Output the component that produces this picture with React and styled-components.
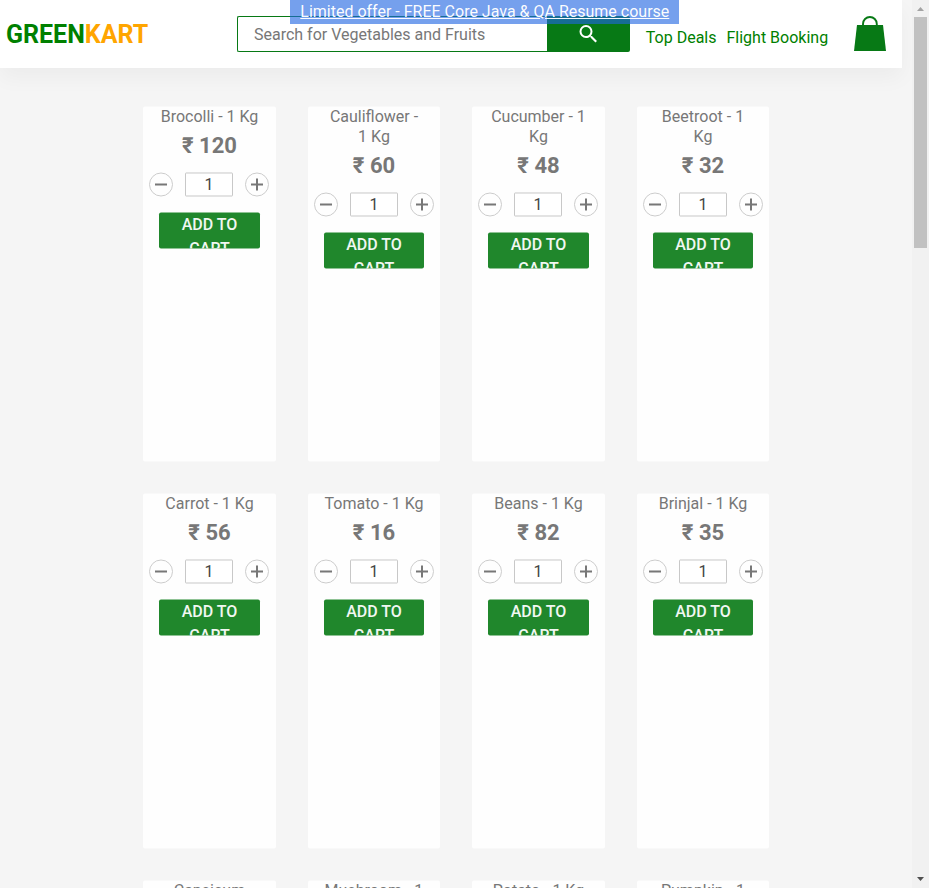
import React from "react";
import styled, { createGlobalStyle } from "styled-components";

const GlobalStyle = createGlobalStyle`
  *, *::before, *::after { box-sizing: border-box; }
  html, body { margin: 0; height: 100%; overflow: hidden; }
  body { background: #f5f5f5; font-family: Roboto, sans-serif; font-size: 16px; }
`;

const Page = styled.div`
  position: relative;
  display: flex;
  height: 888px;
  overflow: hidden;
`;

const Content = styled.div`
  width: 912px;
  height: 888px;
  overflow: hidden;
`;

const Header = styled.header`
  display: flex;
  align-items: flex-start;
  width: 902px;
  height: 68px;
  background: #fff;
  box-shadow: 0 10px 20px rgba(0, 0, 0, 0.04);
`;

const Brand = styled.div`
  width: 231px;
  margin: 20px 0 0 6px;
  font-size: 25px;
  line-height: 30px;
  font-weight: 700;
  color: #008000;
`;

const BrandAccent = styled.span`
  color: #ffa500;
`;

const Search = styled.form`
  display: flex;
  width: 393px;
  height: 36px;
  margin-top: 16px;
`;

const SearchInput = styled.input`
  width: 310px;
  height: 36px;
  padding: 0 16px;
  border: 1px solid #077915;
  border-right: 0;
  border-radius: 2px 0 0 2px;
  outline: none;
  background: #fff;
  font: 16px Roboto, sans-serif;
  color: #555;
  &::placeholder { color: #777; opacity: 1; }
`;

const SearchButton = styled.button`
  width: 83px;
  height: 36px;
  padding: 0;
  border: 0;
  border-radius: 0 2px 2px 0;
  background: #077915;
  svg { display: block; margin: -1px 0 0 29px; }
`;

const Nav = styled.nav`
  display: flex;
  gap: 10px;
  width: 208px;
  margin: 28px 0 0 15.8px;
`;

const NavLink = styled.a`
  line-height: 20px;
  white-space: nowrap;
  color: #008000;
`;

const Bag = styled.svg`
  display: block;
  width: 32px;
  height: 36px;
  margin: 15px 0 0 0.2px;
`;

const Offer = styled.div`
  position: absolute;
  top: 0;
  left: 290px;
  width: 389px;
  height: 24px;
  background: rgb(33, 101, 226);
  opacity: 0.62;
`;

const OfferText = styled.a`
  position: absolute;
  top: 0;
  left: 290.3px;
  width: 389px;
  height: 24px;
  line-height: 23px;
  text-align: center;
  white-space: nowrap;
  text-decoration: underline;
  color: rgba(255, 255, 255, 0.97);
`;

const Products = styled.main`
  display: grid;
  grid-template-columns: 133px 132px 133px 132px;
  grid-auto-rows: 355px;
  gap: 32px;
  margin: 39px 0 0 143px;
`;

const Card = styled.article`
  padding: 0 6px;
  border-radius: 2px;
  background: #fefefe;
  text-align: center;
  transform: translateY(-0.5px) scale(0.9999);
`;

const Name = styled.h4`
  margin: 0;
  font-size: 16px;
  line-height: 20px;
  font-weight: 400;
  white-space: pre-line;
  color: #777;
`;

const Price = styled.p`
  margin: 5px 0 0;
  font-size: 22px;
  line-height: 27px;
  font-weight: 700;
  color: #777;
`;

const Stepper = styled.div`
  display: flex;
  justify-content: space-between;
  width: 120px;
  margin: 14px 0 16px;
`;

const RoundButton = styled.button`
  display: grid;
  place-items: center;
  width: 24px;
  height: 24px;
  padding: 0;
  border: 1px solid #ccc;
  border-radius: 50%;
  background: transparent;
`;

const Quantity = styled.input`
  width: 48px;
  height: 24px;
  padding: 0 0 1px;
  border: 1px solid #c8c8c8;
  border-radius: 1px;
  background: #fff;
  text-align: center;
  font: 16px Roboto, sans-serif;
  color: #444;
`;

const AddButton = styled.button`
  display: block;
  width: calc(100% - 20px);
  height: 36px;
  margin: 0 auto;
  padding: 0 16px;
  overflow: hidden;
  border: 0;
  border-radius: 2px;
  background: #20872c;
  font: 500 16px/24px Roboto, sans-serif;
  color: #f1f7f2;
`;

const AddLabel = styled.span`
  display: block;
  height: 36px;
`;

const Scrollbar = styled.aside`
  display: flex;
  flex-direction: column;
  justify-content: space-between;
  width: 17px;
  height: 888px;
  background: #f1f1f1;
`;

const Arrow = styled.svg`
  display: block;
  width: 17px;
  height: 17px;
  fill: ${(p) => p.$color};
`;

const Thumb = styled.div`
  width: 13px;
  height: 231px;
  margin: 0 2px auto;
  background: #c1c1c1;
`;

const products = [
  ["Brocolli - 1 Kg", 120],
  ["Cauliflower -\n1 Kg", 60],
  ["Cucumber - 1\nKg", 48],
  ["Beetroot - 1\nKg", 32],
  ["Carrot - 1 Kg", 56],
  ["Tomato - 1 Kg", 16],
  ["Beans - 1 Kg", 82],
  ["Brinjal - 1 Kg", 35],
  ["Capsicum", 60],
  ["Mushroom - 1\nKg", 75],
  ["Potato - 1 Kg", 22],
  ["Pumpkin - 1\nKg", 48],
];

function StepIcon({ plus }) {
  return (
    <svg width="14" height="14" viewBox="0 0 14 14" stroke="#777" strokeWidth="2">
      <path d={plus ? "M1 7h12M7 1v12" : "M1 7h12"} />
    </svg>
  );
}

function Product({ name, price }) {
  return (
    <Card>
      <Name>{name}</Name>
      <Price>₹ {price}</Price>
      <Stepper>
        <RoundButton aria-label="Decrease"><StepIcon /></RoundButton>
        <Quantity defaultValue="1" aria-label="Quantity" />
        <RoundButton aria-label="Increase"><StepIcon plus /></RoundButton>
      </Stepper>
      <AddButton><AddLabel>ADD TO CART</AddLabel></AddButton>
    </Card>
  );
}

export default function App() {
  return (
    <Page>
      <GlobalStyle />
      <Content>
        <Header>
          <Brand>GREEN<BrandAccent>KART</BrandAccent></Brand>
          <Search>
            <SearchInput placeholder="Search for Vegetables and Fruits" />
            <SearchButton type="button" aria-label="Search">
              <svg width="24" height="24" viewBox="-0.5 0 24 24" fill="#fff">
                <path d="M15.5 14h-.79l-.28-.27A6.47 6.47 0 0 0 16 9.5 6.5 6.5 0 1 0 9.5 16c1.61 0 3.09-.59 4.23-1.57l.27.28v.79l5 4.99L20.49 19l-4.99-5zm-6 0a4.5 4.5 0 1 1 0-9 4.5 4.5 0 0 1 0 9z" />
              </svg>
            </SearchButton>
          </Search>
          <Nav>
            <NavLink>Top Deals</NavLink>
            <NavLink>Flight Booking</NavLink>
          </Nav>
          <Bag viewBox="0 0 32 36">
            <path d="M3 10h26l3 26H0z" fill="#077915" />
            <path d="M9 11V8.9a6.9 6.9 0 0 1 13.8 0V11" fill="none" stroke="#077915" strokeWidth="1.9" />
          </Bag>
        </Header>
        <Products>
          {products.map(([name, price]) => (
            <Product key={name} name={name} price={price} />
          ))}
        </Products>
      </Content>
      <Scrollbar>
        <Arrow $color="#a3a3a3" viewBox="0 0 17 17"><path d="M5 11l3.5-4 3.5 4z" /></Arrow>
        <Thumb />
        <Arrow $color="#505050" viewBox="0 0 17 17"><path d="M5 6h7l-3.5 4z" /></Arrow>
      </Scrollbar>
      <Offer />
      <OfferText>Limited offer - FREE Core Java &amp; QA Resume course</OfferText>
    </Page>
  );
}
